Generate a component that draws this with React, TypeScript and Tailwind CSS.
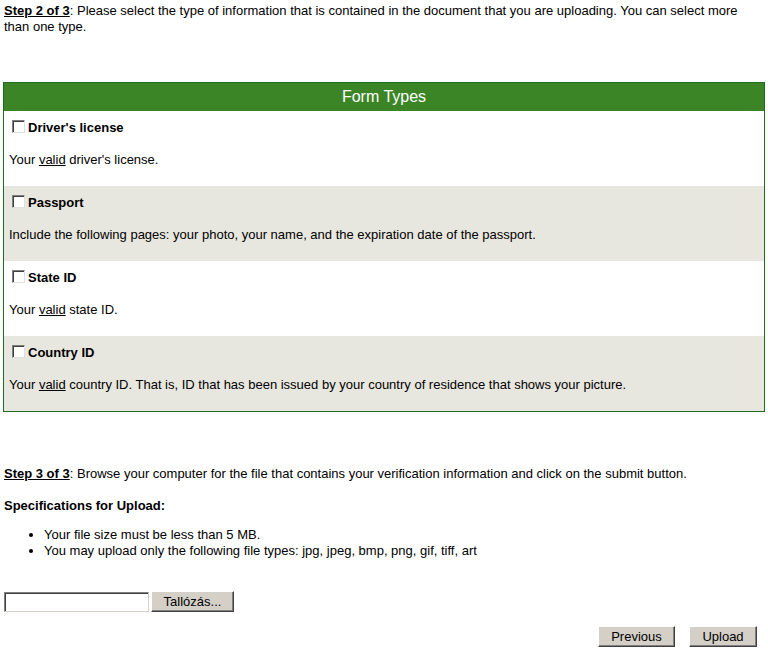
import React from 'react';

const rows = [
  { title: "Driver's license", desc: <>Your <u>valid</u> driver's license.</>, gray: false },
  { title: 'Passport', desc: <>Include the following pages: your photo, your name, and the expiration date of the passport.</>, gray: true },
  { title: 'State ID', desc: <>Your <u>valid</u> state ID.</>, gray: false },
  {
    title: 'Country ID',
    desc: <>Your <u>valid</u> country ID. That is, ID that has been issued by your country of residence that shows your picture.</>,
    gray: true,
  },
];

function Box() {
  return (
    <span className="inline-block w-[13px] h-[13px] bg-white border border-t-[#808080] border-l-[#808080] border-r-[#e0e0e0] border-b-[#e0e0e0] shadow-[inset_1px_1px_0_#404040] ml-[3px] mr-[3px] translate-y-[-2px]" />
  );
}

function Btn({ children, className = '' }: { children: React.ReactNode; className?: string }) {
  return (
    <button className={`h-[21px] bg-[#d4d0c8] border border-t-white border-l-white border-r-[#404040] border-b-[#404040] shadow-[inset_-1px_-1px_0_#808080] text-[13px] text-black leading-none ${className}`}>
      {children}
    </button>
  );
}

export default function App() {
  return (
    <div className="w-[768px] h-[654px] bg-white text-black text-[13px] leading-[16px] font-['Liberation_Sans',Arial,sans-serif] px-[4px] pt-[3px]">
      <p className="pr-[4px]">
        <u className="font-bold">Step 2 of 3</u>: Please select the type of information that is contained in the document that you are uploading. You can select more than one type.
      </p>

      <div className="mt-[47px] -ml-[1px] w-[762px] border border-[#1f6e1f]">
        <div className="h-[28px] bg-[#3b8527] text-white text-[16px] flex items-center justify-center">Form Types</div>
        {rows.map((r) => (
          <div key={r.title} className={`h-[75px] px-[5px] pt-[9px] ${r.gray ? 'bg-[#e8e7df]' : 'bg-white'}`}>
            <div className="flex items-center font-bold h-[16px]">
              <Box />
              {r.title}
            </div>
            <div className="mt-[16px]">{r.desc}</div>
          </div>
        ))}
      </div>

      <p className="mt-[54px]">
        <u className="font-bold">Step 3 of 3</u>: Browse your computer for the file that contains your verification information and click on the submit button.
      </p>
      <p className="mt-[16px] font-bold">Specifications for Upload:</p>
      <ul className="mt-[13px] pl-[40px] list-disc">
        <li>Your file size must be less than 5 MB.</li>
        <li>You may upload only the following file types: jpg, jpeg, bmp, png, gif, tiff, art</li>
      </ul>

      <div className="mt-[32px] flex items-center gap-[2px]">
        <input className="w-[145px] h-[20px] bg-white border border-t-[#808080] border-l-[#808080] border-r-[#d4d0c8] border-b-[#d4d0c8] shadow-[inset_1px_1px_0_#404040]" />
        <Btn className="w-[83px]">Tallózás...</Btn>
      </div>

      <div className="mt-[14px] flex justify-end gap-[14px] pr-[7px]">
        <Btn className="w-[77px]">Previous</Btn>
        <Btn className="w-[68px]">Upload</Btn>
      </div>
    </div>
  );
}
